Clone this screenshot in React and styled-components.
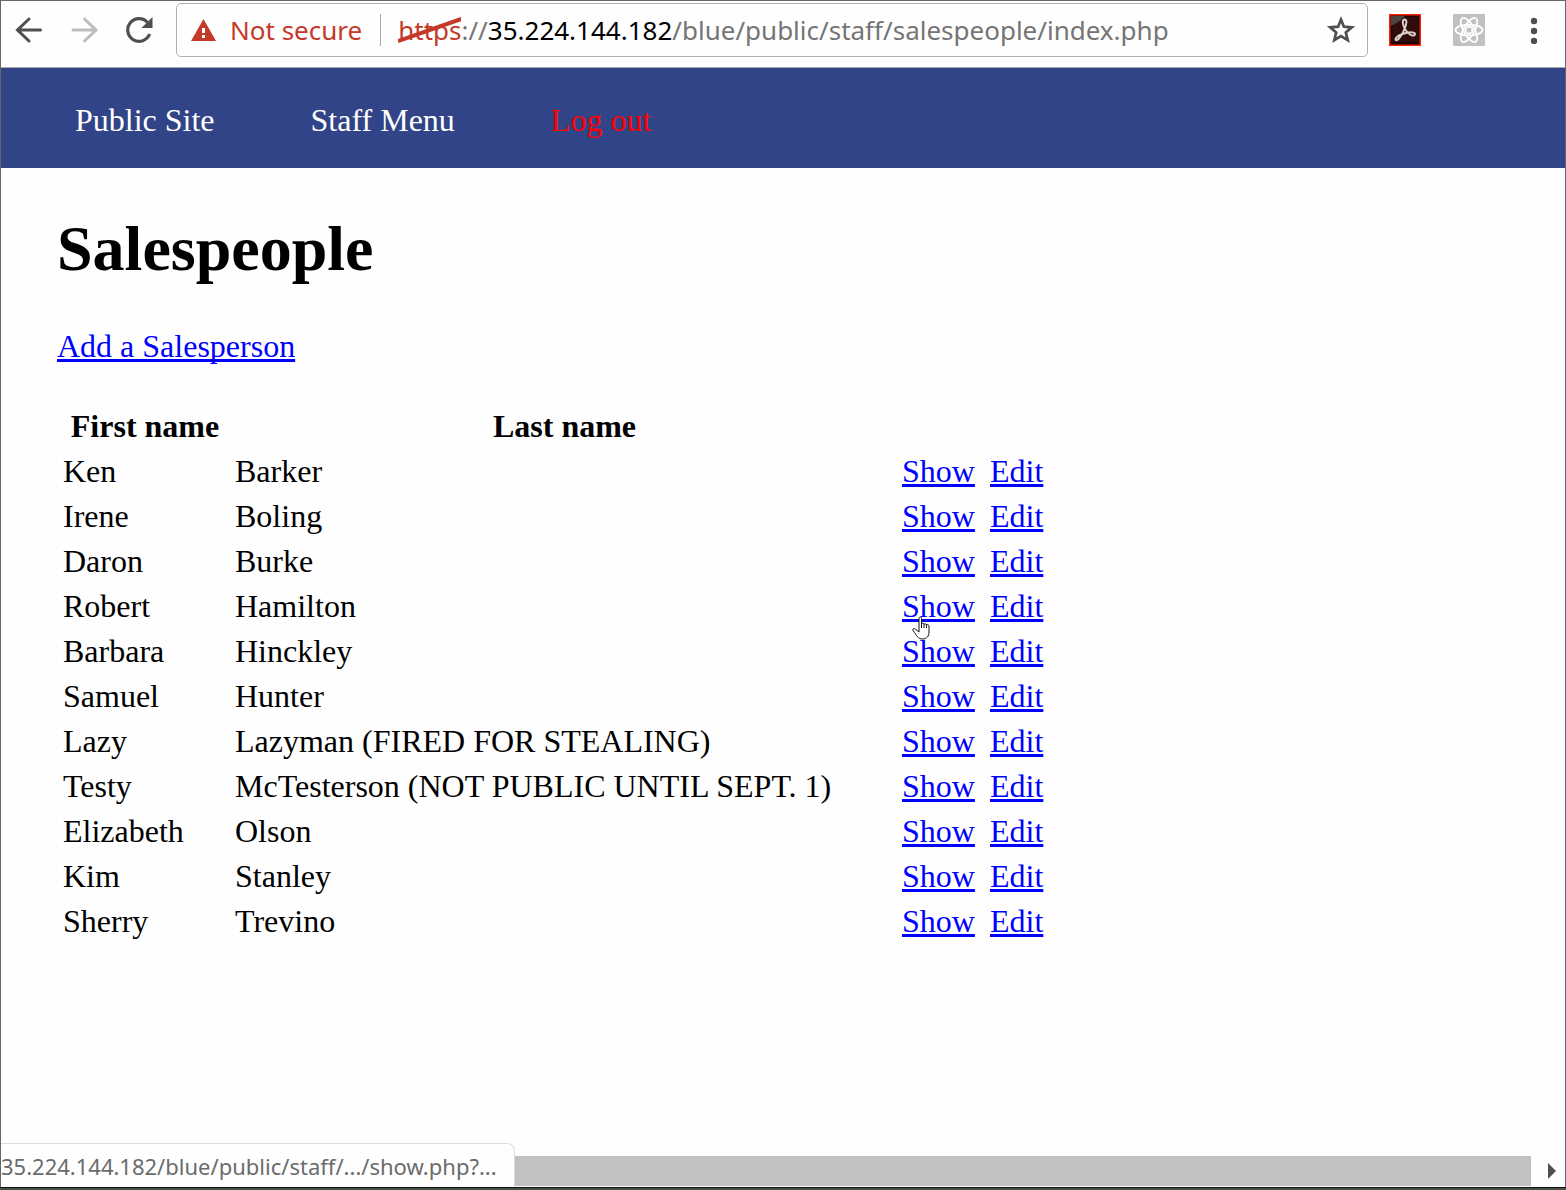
import React from "react";
import styled, { createGlobalStyle } from "styled-components";

const sans = `"Noto Sans", "Open Sans", sans-serif`;
const serif = `"Liberation Serif", "Times New Roman", serif`;

const GlobalStyle = createGlobalStyle`
  *, *::before, *::after { box-sizing: border-box; }
  body { margin: 0; background: #fefefe; }
`;

const Window = styled.div`
  position: relative;
  display: flex;
  flex-direction: column;
  min-height: 100vh;
  border: 1px solid #666;
  border-bottom: 0;
  background: #fefefe;
  font-family: ${serif};
  font-size: 32px;
  line-height: 37px;
  color: #000;
`;

const Toolbar = styled.header`
  display: flex;
  align-items: flex-start;
  height: 67px;
  padding: 2px 27px 0 12px;
  border-bottom: 1px solid #a9a9ae;
  font-family: ${sans};
`;

const ToolGroup = styled.div`
  display: flex;
  align-items: center;
  height: 54px;
  gap: ${(p) => p.$gap}px;
`;

const IconButton = styled.button`
  display: flex;
  padding: 0;
  border: 0;
  background: none;
  color: #4f4f4f;

  &:disabled { color: #bdbdbd; }
`;

const AddressBar = styled.div`
  display: flex;
  flex: 1;
  align-items: center;
  height: 54px;
  margin: 0 21px 0 23px;
  padding: 0 11px 0 14px;
  border: 1px solid #b0b0b3;
  border-radius: 5px;
  font-size: 26px;
  line-height: 36px;
  white-space: nowrap;
`;

const Security = styled.button`
  display: flex;
  align-items: center;
  gap: 14px;
  height: 32px;
  padding: 0 18px 0 0;
  border: 0;
  border-right: 1px solid #a9a9a9;
  background: none;
  font: inherit;
  color: #c53929;
`;

const Url = styled.div`
  flex: 1;
  padding-left: 17px;
  color: #757575;
`;

const Host = styled.span`
  color: #000;
`;

const Scheme = styled.span`
  position: relative;
  color: #c53929;
`;

const Strike = styled.svg`
  position: absolute;
  left: 0;
  top: 4px;
  width: 100%;
  height: 28px;
`;

const Nav = styled.nav`
  display: flex;
  gap: 96px;
  padding: 34px 74px 29px;
  background: #314487;
`;

const NavLink = styled.a`
  color: ${(p) => (p.$alert ? "#ff0000" : "#fff")};
  text-decoration: none;
`;

const Main = styled.main`
  flex: 1;
  padding: 44px 56px;
`;

const Title = styled.h1`
  margin: 0;
  font-size: 64px;
  line-height: 74px;
`;

const Actions = styled.p`
  margin: 42px 0 37px;
`;

const Link = styled.a`
  color: #0000ff;
  text-decoration: underline 3px;
  text-decoration-skip-ink: none;
  text-underline-offset: 2px;
`;

const Table = styled.table`
  border-collapse: separate;
  border-spacing: 4px;
  table-layout: fixed;
  width: 992px;
`;

const Column = styled.col`
  width: ${(p) => p.$width}px;
`;

const Head = styled.th`
  padding: 2px;
`;

const Cell = styled.td`
  position: relative;
  padding: 2px;
  white-space: nowrap;
`;

const Pointer = styled.svg`
  position: absolute;
  left: 12px;
  top: 30px;
  width: 18px;
  height: 24px;
`;

const ScrollRow = styled.div`
  display: flex;
  align-items: center;
  height: 31px;
  padding-bottom: 1px;
`;

const Thumb = styled.div`
  flex: 1;
  height: 30px;
  background: #c1c1c1;
`;

const ScrollArrow = styled.button`
  display: flex;
  align-items: center;
  justify-content: center;
  width: 34px;
  padding: 0 0 0 8px;
  border: 0;
  background: none;
`;

const Edge = styled.div`
  height: 3px;
  margin: 0 -1px;
  border-top: 1px solid #101214;
  background: #4c4e4e;
`;

const Status = styled.div`
  position: absolute;
  left: 0;
  bottom: 3px;
  min-width: 514px;
  height: 44px;
  padding: 6px 6px 0 0;
  border: 1px solid #dcdcdc;
  border-width: 1px 1px 0 0;
  border-radius: 0 8px 0 0;
  background: #fefefe;
  font-family: ${sans};
  font-size: 22px;
  line-height: 32px;
  color: #6b6b6b;
  white-space: nowrap;
`;

const people = [
  ["Ken", "Barker"],
  ["Irene", "Boling"],
  ["Daron", "Burke"],
  ["Robert", "Hamilton"],
  ["Barbara", "Hinckley"],
  ["Samuel", "Hunter"],
  ["Lazy", "Lazyman (FIRED FOR STEALING)"],
  ["Testy", "McTesterson (NOT PUBLIC UNTIL SEPT. 1)"],
  ["Elizabeth", "Olson"],
  ["Kim", "Stanley"],
  ["Sherry", "Trevino"],
];

const BackIcon = () => (
  <svg width="32" height="28" viewBox="0 0 32 28" fill="none" stroke="currentColor" strokeWidth="3">
    <path d="M16 3 4.500 14 16 25M4.500 14h23" strokeLinecap="round" />
  </svg>
);

const ForwardIcon = () => (
  <svg width="32" height="28" viewBox="0 0 32 28" fill="none" stroke="currentColor" strokeWidth="3">
    <path d="M15.500 3 27 14 15.500 25M27 14H4" strokeLinecap="round" />
  </svg>
);

const ReloadIcon = () => (
  <svg width="28" height="28" viewBox="0 0 28 28">
    <path d="M22.5 6.5A11.3 11.3 0 1 0 24.600 18" fill="none" stroke="currentColor" strokeWidth="3.2" />
    <path d="M27.5 1v11h-11z" fill="currentColor" />
  </svg>
);

const WarningIcon = () => (
  <svg width="25" height="22" viewBox="0 0 25 22">
    <path d="M12.500 0 25 22H0z" fill="#c53929" />
    <path d="M11 9h3v5h-3zM11 16h3v3h-3z" fill="#fff" />
  </svg>
);

const StarIcon = () => (
  <svg width="30" height="30" viewBox="0 0 30 30">
    <path
      d="M15 4.500l2.900 7.200 7.900.6-6 5.100 1.900 7.700-6.700-4.100-6.700 4.100 1.900-7.700-6-5.100 7.900-.6z"
      fill="none"
      stroke="#4f4f4f"
      strokeWidth="2.700"
    />
  </svg>
);

const AcrobatIcon = () => (
  <svg width="32" height="32" viewBox="0 0 32 32">
    <path d="M0 0h32v32H0z" fill="#ff2100" />
    <path d="M1.500 1.500h29v29h-29z" fill="#1c0605" />
    <path d="M4 3h25v25H3z" fill="#300d0b" />
    <path d="M2 2h14l-5 5-9 5z" fill="#4a4443" />
    <g fill="none" stroke="#d8d0cc" strokeWidth="2" strokeLinejoin="round">
      <path d="M15.500 14C13.500 10 13 6 15.500 5.500s2.500 4 0 9.500c-1.500 4-4 8-6 10-2 2-4 1-2.500-1 1.500-2 6-4 10-5 4-1 9-1 9 1s-3 2-5 .5c-2-1.500-4.500-4-5.500-6.500z" />
    </g>
  </svg>
);

const ReactIcon = () => (
  <svg width="32" height="32" viewBox="0 0 32 32">
    <rect width="32" height="32" rx="1" fill="#c1c1c1" />
    <g fill="none" stroke="#fff" strokeWidth="1.800">
      <ellipse cx="16" cy="16" rx="13.500" ry="5.400" />
      <ellipse cx="16" cy="16" rx="13.500" ry="5.400" transform="rotate(60 16 16)" />
      <ellipse cx="16" cy="16" rx="13.500" ry="5.400" transform="rotate(120 16 16)" />
      <circle cx="16" cy="16" r="3.500" />
    </g>
  </svg>
);

const MenuIcon = () => (
  <svg width="8" height="28" viewBox="0 0 8 28" fill="#4f4f4f">
    <circle cx="4" cy="5" r="3.200" />
    <circle cx="4" cy="15" r="3.200" />
    <circle cx="4" cy="25" r="3.200" />
  </svg>
);

const HandPointer = () => (
  <Pointer viewBox="0 0 18 24" aria-hidden="true">
    <path
      d="M7 16V2.500c0-2 2.500-2 2.500 0V8c0-1 2.500-1 2.500.5 0-1 2.500-1 2.500.5 0-1 2.500-.5 2.500 1v6c0 4-2 7-6.500 7C6 23 5 20 1 14.500c-1-2 1.500-2.500 3-1z"
      fill="#fff"
      stroke="#111"
      strokeWidth="1"
    />
    <path d="M9.500 8v4M12 8.500V12M14.500 9v3" stroke="#111" strokeWidth="1" />
  </Pointer>
);

export default function App() {
  return (
    <Window>
      <GlobalStyle />
      <Toolbar>
        <ToolGroup $gap={24}>
          <IconButton aria-label="Back"><BackIcon /></IconButton>
          <IconButton aria-label="Forward" disabled><ForwardIcon /></IconButton>
          <IconButton aria-label="Reload"><ReloadIcon /></IconButton>
        </ToolGroup>
        <AddressBar>
          <Security><WarningIcon />Not secure</Security>
          <Url>
            <Scheme>
              https
              <Strike viewBox="0 0 64 28" preserveAspectRatio="none" aria-hidden="true">
                <path d="M0 25 64 3" stroke="#c53929" strokeWidth="4" />
              </Strike>
            </Scheme>
            ://<Host>35.224.144.182</Host>/blue/public/staff/salespeople/index.php
          </Url>
          <IconButton aria-label="Bookmark"><StarIcon /></IconButton>
        </AddressBar>
        <ToolGroup $gap={45}>
          <ToolGroup $gap={32}>
            <IconButton aria-label="Acrobat"><AcrobatIcon /></IconButton>
            <IconButton aria-label="React tools"><ReactIcon /></IconButton>
          </ToolGroup>
          <IconButton aria-label="Menu"><MenuIcon /></IconButton>
        </ToolGroup>
      </Toolbar>
      <Nav>
        <NavLink href="#public">Public Site</NavLink>
        <NavLink href="#staff">Staff Menu</NavLink>
        <NavLink href="#logout" $alert>Log out</NavLink>
      </Nav>
      <Main>
        <Title>Salespeople</Title>
        <Actions><Link href="#new">Add a Salesperson</Link></Actions>
        <Table>
          <colgroup>
            <Column $width={168} />
            <Column $width={663} />
            <Column $width={84} />
            <Column $width={57} />
          </colgroup>
          <thead>
            <tr>
              <Head scope="col">First name</Head>
              <Head scope="col">Last name</Head>
              <Cell />
              <Cell />
            </tr>
          </thead>
          <tbody>
            {people.map(([first, last]) => (
              <tr key={last}>
                <Cell>{first}</Cell>
                <Cell>{last}</Cell>
                <Cell>
                  <Link href="#show">Show</Link>
                  {first === "Robert" && <HandPointer />}
                </Cell>
                <Cell><Link href="#edit">Edit</Link></Cell>
              </tr>
            ))}
          </tbody>
        </Table>
      </Main>
      <ScrollRow>
        <Thumb />
        <ScrollArrow aria-label="Scroll right">
          <svg width="8" height="16" viewBox="0 0 8 16"><path d="M0 0l8 8-8 8z" fill="#4f4f4f" /></svg>
        </ScrollArrow>
      </ScrollRow>
      <Edge />
      <Status>35.224.144.182/blue/public/staff/.../show.php?...</Status>
    </Window>
  );
}
